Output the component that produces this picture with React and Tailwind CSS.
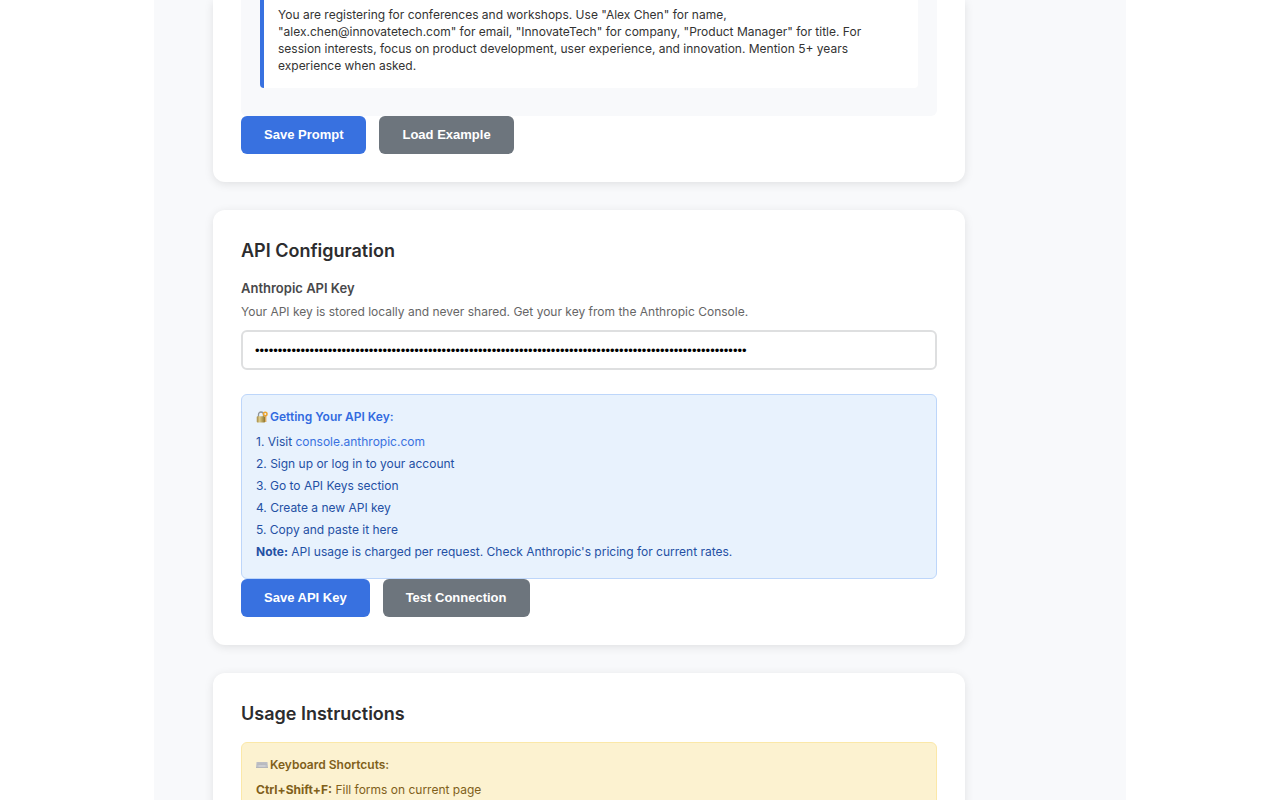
import React, { useState } from "react";

function LockIcon() {
  return (
    <svg aria-hidden="true" viewBox="0 0 24 24" className="h-3 w-3 shrink-0">
      <defs>
        <linearGradient id="lock-body" x1="0" x2="1" y1="0" y2="0">
          <stop offset="0" stopColor="#a58a45" />
          <stop offset="0.35" stopColor="#dccb88" />
          <stop offset="1" stopColor="#8d742e" />
        </linearGradient>
      </defs>
      <path d="M5 12V7a5 5 0 0 1 10 0v5" fill="none" stroke="#8f9599" strokeWidth="2.6" />
      <rect x="1.5" y="10.5" width="16.5" height="12.5" rx="1.5" fill="url(#lock-body)" />
      <circle cx="18.5" cy="6" r="3.5" fill="none" stroke="#eda52c" strokeWidth="3" />
      <path d="M19.5 9v13" fill="none" stroke="#dda045" strokeWidth="2.4" />
    </svg>
  );
}

function KeyboardIcon() {
  return (
    <svg aria-hidden="true" viewBox="0 0 24 24" className="h-3 w-3 shrink-0">
      <path d="M1 6h22l1 11H0z" fill="#bfc1c6" />
      <path d="M0 16h24v2H0z" fill="#b4b6ba" />
      <path d="M3 8.5h18M2.5 11h19" stroke="#b0b2b9" strokeWidth="1.3" strokeDasharray="1.8 0.7" />
      <path d="M5 14h14" stroke="#dcdde0" strokeWidth="1.8" />
    </svg>
  );
}

function Card({ title, children }) {
  return (
    <section className="rounded-xl bg-white p-7 shadow-[0_2px_10px_rgba(0,0,0,0.1)]">
      <h2 className="mb-4 text-lg leading-[25px] font-semibold text-[#2c2c2e]">{title}</h2>
      {children}
    </section>
  );
}

function Button({ primary, children }) {
  return (
    <button
      type="button"
      className={
        "h-[38px] rounded-md px-[23px] font-['Liberation_Sans',sans-serif] text-[13px] font-bold text-white " +
        (primary ? "bg-[#3871e0]" : "bg-[#6d757d]")
      }
    >
      {children}
    </button>
  );
}

export default function App() {
  const [apiKey, setApiKey] = useState("k".repeat(108));

  return (
    <div className="min-h-screen bg-white font-[Inter,'Liberation_Sans',sans-serif] text-xs text-[#333333]">
      <main className="mx-auto min-h-screen max-w-[972px] bg-[#f8f9fb] pr-[161px] pl-[59px]">
        <div className="flex flex-col gap-7">
          <section className="rounded-b-xl bg-white px-7 pb-7 shadow-[0_2px_10px_rgba(0,0,0,0.1)]">
            <div className="rounded-b-md bg-[#f8f9fb] px-[19px] pb-7">
              <p className="rounded-b border-l-4 border-[#3871e0] bg-white pt-1.5 pr-10 pb-3.5 pl-3.5 leading-[17px]">
                You are registering for conferences and workshops. Use "Alex Chen" for name,
                "alex.chen@innovatetech.com" for email, "InnovateTech" for company, "Product Manager" for title. For
                session interests, focus on product development, user experience, and innovation. Mention 5+ years
                experience when asked.
              </p>
            </div>
            <div className="flex gap-[13px]">
              <Button primary>Save Prompt</Button>
              <Button>Load Example</Button>
            </div>
          </section>

          <Card title="API Configuration">
            <label htmlFor="api-key" className="block text-[13px] leading-[18px] font-semibold text-[#48484a]">
              Anthropic API Key
            </label>
            <p id="api-key-help" className="mt-[5px] leading-5 text-[#666666]">
              Your API key is stored locally and never shared. Get your key from the Anthropic Console.
            </p>
            <input
              id="api-key"
              type="password"
              aria-describedby="api-key-help"
              value={apiKey}
              onChange={(event) => setApiKey(event.target.value)}
              className="mt-2 block h-10 w-full rounded-md border-2 border-[#dedfe0] bg-white px-3 font-['Liberation_Sans',sans-serif] text-[13px] text-black"
            />
            <div className="mt-6 rounded-md border border-[#bdd6fa] bg-[#e8f2fd] px-3.5 pt-3.5 pb-[15px] text-[#2450a4]">
              <h3 className="mb-1.5 flex items-center gap-0.5 leading-4 font-semibold text-[#326ae0]">
                <LockIcon />
                Getting Your API Key:
              </h3>
              <div className="leading-[22px]">
                <p>
                  1. Visit{" "}
                  <a href="https://console.anthropic.com" className="text-[#3871e0]">
                    console.anthropic.com
                  </a>
                </p>
                <p>2. Sign up or log in to your account</p>
                <p>3. Go to API Keys section</p>
                <p>4. Create a new API key</p>
                <p>5. Copy and paste it here</p>
                <p>
                  <strong className="font-bold">Note:</strong> API usage is charged per request. Check Anthropic's
                  pricing for current rates.
                </p>
              </div>
            </div>
            <div className="flex gap-[13px]">
              <Button primary>Save API Key</Button>
              <Button>Test Connection</Button>
            </div>
          </Card>

          <Card title="Usage Instructions">
            <div className="rounded-md border border-[#fbe8a8] bg-[#fcf2d0] px-3.5 pt-3.5 pb-[15px] text-[#80601a]">
              <h3 className="mb-1.5 flex items-center gap-0.5 leading-4 font-semibold">
                <KeyboardIcon />
                Keyboard Shortcuts:
              </h3>
              <p className="leading-[22px]">
                <strong className="font-bold">Ctrl+Shift+F:</strong> Fill forms on current page
              </p>
            </div>
          </Card>
        </div>
      </main>
    </div>
  );
}
